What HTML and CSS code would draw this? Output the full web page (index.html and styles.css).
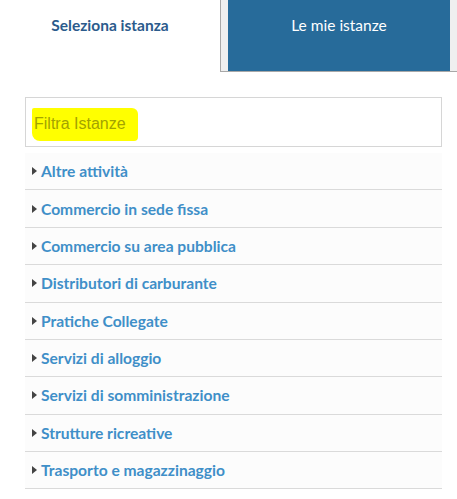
FILE: index.html
```html
<!DOCTYPE html>
<html>
<head>
<meta charset="utf-8">
<link rel="stylesheet" href="styles.css">
</head>
<body>
<div class="tabs">
  <div class="tab tab-active">Seleziona istanza</div>
  <div class="tab-wrap">
    <div class="tab tab-blue">Le mie istanze</div>
  </div>
</div>
<div class="content">
  <div class="filter"><span class="hl">Filtra Istanze</span></div>
  <ul class="list">
    <li class="row"><span class="caret"></span>Altre attività</li>
    <li class="row"><span class="caret"></span>Commercio in sede fissa</li>
    <li class="row"><span class="caret"></span>Commercio su area pubblica</li>
    <li class="row"><span class="caret"></span>Distributori di carburante</li>
    <li class="row"><span class="caret"></span>Pratiche Collegate</li>
    <li class="row"><span class="caret"></span>Servizi di alloggio</li>
    <li class="row"><span class="caret"></span>Servizi di somministrazione</li>
    <li class="row"><span class="caret"></span>Strutture ricreative</li>
    <li class="row"><span class="caret"></span>Trasporto e magazzinaggio</li>
  </ul>
</div>
</body>
</html>
```
FILE: styles.css
```css
html, body {
  margin: 0;
  padding: 0;
  background: #fff;
  font-family: "Lato", "Liberation Sans", sans-serif;
}
.tabs {
  display: flex;
  height: 72px;
}
.tab {
  display: flex;
  justify-content: center;
  padding-top: 16px;
  box-sizing: border-box;
  font-size: 15.5px;
}
.tab-active {
  width: 220px;
  color: #2b5b8c;
  font-weight: 700;
}
.tab-wrap {
  flex: 1;
  display: flex;
  background: #efefef;
  border-left: 1px solid #a8a8a8;
  border-bottom: 1px solid #a8a8a8;
  padding: 0 7px;
}
.tab-blue {
  flex: 1;
  background: #276b9a;
  color: #fff;
}
.content {
  padding: 25px 15px 0 25px;
}
.filter {
  height: 48px;
  border: 1px solid #d6d6d6;
  display: flex;
  align-items: center;
  padding-left: 6px;
  font-family: "Liberation Sans", Arial, sans-serif;
  font-size: 16px;
}
.hl {
  background: #ffff00;
  color: #a3a300;
  padding: 7px 12px 8px 2px;
  border-radius: 2px 6px 4px 8px;
  margin-top: 4px;
}
.list {
  list-style: none;
  margin: 6px 0 0 0;
  padding: 0;
}
.row {
  height: 36.375px;
  border-bottom: 1px solid #dadada;
  background: #fcfcfc;
  display: flex;
  align-items: center;
  padding-left: 7px;
  font-family: "Lato", sans-serif;
  font-weight: 700;
  font-size: 15.6px;
  color: #3f8fc8;
}
.caret {
  width: 0;
  height: 0;
  border-top: 4px solid transparent;
  border-bottom: 4px solid transparent;
  border-left: 5px solid #444;
  margin-right: 4px;
}
```
